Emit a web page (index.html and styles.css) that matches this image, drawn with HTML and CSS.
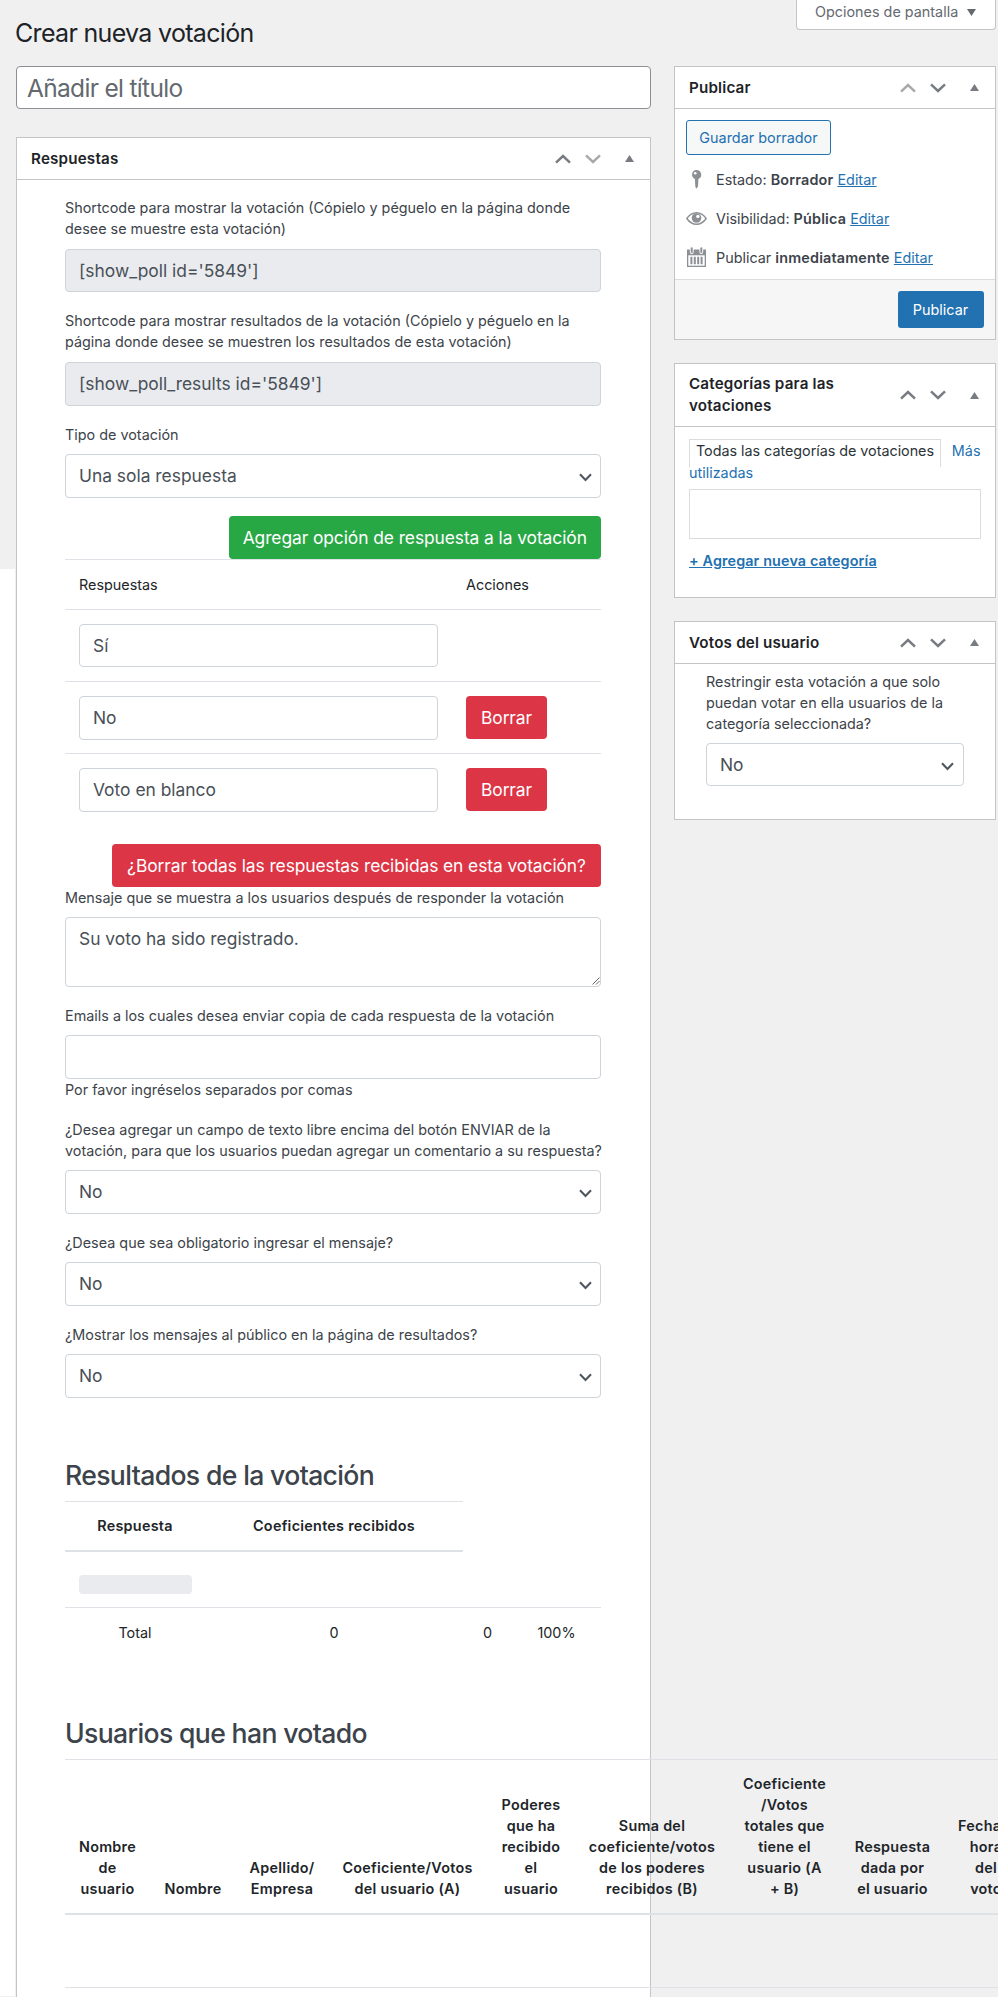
FILE: index.html
```html
<!DOCTYPE html>
<html lang="es">
<head>
<meta charset="utf-8">
<title>Crear nueva votación</title>
<link rel="stylesheet" href="styles.css">
</head>
<body>
<svg class="defs" width="0" height="0" aria-hidden="true">
  <symbol id="up" viewBox="0 0 16 10"><path d="M1 8.6 8 2l7 6.6" fill="none" stroke="currentColor" stroke-width="2.5"/></symbol>
  <symbol id="down" viewBox="0 0 16 10"><path d="M1 1.4 8 8l7-6.6" fill="none" stroke="currentColor" stroke-width="2.5"/></symbol>
  <symbol id="tri" viewBox="0 0 9 7"><path d="M4.5 0 9 7H0z" fill="currentColor"/></symbol>
  <symbol id="caret" viewBox="0 0 13 9"><path d="M1 1.3 6.5 7 12 1.3" fill="none" stroke="#50575e" stroke-width="2.1"/></symbol>
</svg>
<div class="page">
  <header class="top">
    <h1 class="page-title">Crear nueva votación</h1>
    <div class="screen-options"><span>Opciones de pantalla</span><svg class="so-tri" viewBox="0 0 9 7"><path d="M0 0h9L4.5 7z" fill="currentColor"/></svg></div>
  </header>
  <div class="columns">
    <main class="main">
      <div class="title-input">Añadir el título</div>
      <section class="box box-main">
        <div class="box-head"><h2>Respuestas</h2><div class="handles"><svg class="chev"><use href="#up"/></svg><svg class="chev dim"><use href="#down"/></svg><svg class="tri"><use href="#tri"/></svg></div></div>
        <div class="content">
          <div class="group"><div class="label">Shortcode para mostrar la votación (Cópielo y péguelo en la página donde<br>desee se muestre esta votación)</div><div class="field readonly">[show_poll id='5849']</div></div>
          <div class="group"><div class="label">Shortcode para mostrar resultados de la votación (Cópielo y péguelo en la<br>página donde desee se muestren los resultados de esta votación)</div><div class="field readonly">[show_poll_results id='5849']</div></div>
          <div class="group"><div class="label">Tipo de votación</div><div class="field select">Una sola respuesta<svg class="caret"><use href="#caret"/></svg></div></div>
          <div class="right"><button class="btn green">Agregar opción de respuesta a la votación</button></div>
          <div class="answers">
            <div class="arow ahead"><span>Respuestas</span><span>Acciones</span></div>
            <div class="arow"><div class="field">Sí</div></div>
            <div class="arow"><div class="field">No</div><button class="btn red">Borrar</button></div>
            <div class="arow"><div class="field">Voto en blanco</div><button class="btn red">Borrar</button></div>
          </div>
          <div class="right wipe"><button class="btn red wide">¿Borrar todas las respuestas recibidas en esta votación?</button></div>
          <div class="group"><div class="label tight">Mensaje que se muestra a los usuarios después de responder la votación</div><div class="field area">Su voto ha sido registrado.<svg class="grip" viewBox="0 0 8 8"><path d="M.5 7.5l7-7M4 7.5L7.5 4" stroke="#666" fill="none"/></svg></div></div>
          <div class="group mail"><div class="label">Emails a los cuales desea enviar copia de cada respuesta de la votación</div><div class="field"></div><div class="help">Por favor ingréselos separados por comas</div></div>
          <div class="group"><div class="label">¿Desea agregar un campo de texto libre encima del botón ENVIAR de la<br>votación, para que los usuarios puedan agregar un comentario a su respuesta?</div><div class="field select">No<svg class="caret"><use href="#caret"/></svg></div></div>
          <div class="group"><div class="label">¿Desea que sea obligatorio ingresar el mensaje?</div><div class="field select">No<svg class="caret"><use href="#caret"/></svg></div></div>
          <div class="group"><div class="label">¿Mostrar los mensajes al público en la página de resultados?</div><div class="field select">No<svg class="caret"><use href="#caret"/></svg></div></div>

          <h3 class="section-title">Resultados de la votación</h3>
          <table class="results">
            <colgroup><col class="r1"><col class="r2"><col class="r3"><col class="r4"></colgroup>
            <thead><tr><th>Respuesta</th><th>Coeficientes recibidos</th></tr></thead>
            <tbody>
              <tr class="progress-row"><td><div class="progress"></div></td><td></td><td></td><td></td></tr>
              <tr class="total"><td>Total</td><td>0</td><td>0</td><td>100%</td></tr>
            </tbody>
          </table>

          <h3 class="section-title second">Usuarios que han votado</h3>
          <table class="voters">
            <colgroup><col class="v1"><col class="v2"><col class="v3"><col class="v4"><col class="v5"><col class="v6"><col class="v7"><col class="v8"><col class="v9"></colgroup>
            <thead><tr>
              <th>Nombre<br>de<br>usuario</th><th>Nombre</th><th>Apellido/<br>Empresa</th><th>Coeficiente/Votos<br>del usuario (A)</th><th>Poderes<br>que ha<br>recibido<br>el<br>usuario</th><th>Suma del<br>coeficiente/votos<br>de los poderes<br>recibidos (B)</th><th>Coeficiente<br>/Votos<br>totales que<br>tiene el<br>usuario (A<br>+ B)</th><th>Respuesta<br>dada por<br>el usuario</th><th>Fecha y<br>hora<br>del<br>voto</th>
            </tr></thead>
            <tbody><tr class="blank"><td colspan="9"></td></tr><tr class="blank"><td colspan="9"></td></tr></tbody>
          </table>
        </div>
      </section>
    </main>

    <aside class="side">
      <section class="box">
        <div class="box-head"><h2>Publicar</h2><div class="handles"><svg class="chev dim"><use href="#up"/></svg><svg class="chev"><use href="#down"/></svg><svg class="tri"><use href="#tri"/></svg></div></div>
        <div class="publish">
          <button class="draft">Guardar borrador</button>
          <div class="misc"><svg class="ico" viewBox="0 0 21 21"><path d="M10.500 1a4.700 4.700 0 0 1 1.900 9l-.4 7.500-1.700 2.300-1-2.300-.4-7.500A4.700 4.700 0 0 1 10.500 1z" fill="#8c8f94"/><circle cx="9.200" cy="4.300" r="1.300" fill="#fff"/></svg><span>Estado: <b>Borrador</b> <a>Editar</a></span></div>
          <div class="misc"><svg class="ico" viewBox="0 0 21 21"><path d="M.8 10.5Q4.800 4.700 10.500 4.700T20.200 10.500Q16.200 16.300 10.500 16.300T.8 10.500z" fill="#fff" stroke="#8c8f94" stroke-width="1.4"/><circle cx="10.500" cy="10" r="4.800" fill="#8c8f94"/><circle cx="11.900" cy="8.400" r="1.700" fill="#fff"/></svg><span>Visibilidad: <b>Pública</b> <a>Editar</a></span></div>
          <div class="misc"><svg class="ico" viewBox="0 0 21 21"><path d="M1 2.500h19V20H1z" fill="#8c8f94"/><path d="M2.300 8.300h16.400v10.400H2.300z" fill="#fff"/><path d="M5.400 9.800v7.500M8.800 9.800v7.500M12.200 9.800v7.500M15.600 9.800v7.500" stroke="#8c8f94" stroke-width="2"/><path d="M5.700 1.500v3.600M15.300 1.500v3.600" stroke="#fff" stroke-width="3.800" stroke-linecap="round"/><path d="M5.700 1.300v3.600M15.300 1.300v3.600" stroke="#8c8f94" stroke-width="2" stroke-linecap="round"/></svg><span>Publicar <b>inmediatamente</b> <a>Editar</a></span></div>
        </div>
        <div class="publish-foot"><button class="primary">Publicar</button></div>
      </section>

      <section class="box">
        <div class="box-head tall"><h2>Categorías para las<br>votaciones</h2><div class="handles"><svg class="chev"><use href="#up"/></svg><svg class="chev"><use href="#down"/></svg><svg class="tri"><use href="#tri"/></svg></div></div>
        <div class="cats">
          <div class="tabs"><span class="tab">Todas las categorías de votaciones</span><a class="more">Más</a></div>
          <a class="used">utilizadas</a>
          <div class="cat-list"></div>
          <a class="add">+ Agregar nueva categoría</a>
        </div>
      </section>

      <section class="box">
        <div class="box-head"><h2>Votos del usuario</h2><div class="handles"><svg class="chev"><use href="#up"/></svg><svg class="chev"><use href="#down"/></svg><svg class="tri"><use href="#tri"/></svg></div></div>
        <div class="votes">
          <div class="label">Restringir esta votación a que solo<br>puedan votar en ella usuarios de la<br>categoría seleccionada?</div>
          <div class="field select">No<svg class="caret"><use href="#caret"/></svg></div>
        </div>
      </section>
    </aside>
  </div>
</div>
</body>
</html>
```
FILE: styles.css
```css
* { box-sizing: border-box; }
html, body { margin: 0; height: 1997px; overflow: hidden; }
body {
  font-family: Inter, "Liberation Sans", sans-serif;
  font-size: 14.380px; line-height: 21px; color: #3c434a;
  background: #f0f0f1;
}
h1, h2, h3 { margin: 0; }
button { font-family: inherit; border: 0; padding: 0; white-space: nowrap; }
.defs { position: absolute; }
.page {
  width: 998px; height: 1997px; overflow: hidden; padding: 0 2.500px 0 16px;
  background: linear-gradient(#fff, #fff) 0 569px / 15px 1427px no-repeat;
}
.top { display: flex; justify-content: space-between; height: 66px; }
.page-title { font-size: 25px; font-weight: 400; line-height: 30px; margin: 18px 0 0 -1px; color: #1d2327; letter-spacing: -0.680px; white-space: nowrap; }
.screen-options {
  display: flex; width: 199.500px; height: 29.500px; padding: 0 0 0 18px;
  background: #fff; border: 1px solid #c3c4c7; border-top: 0; border-radius: 0 0 4px 4px;
  color: #646970; white-space: nowrap;
}
.screen-options span { width: 152px; line-height: 23px; }
.so-tri { width: 9px; height: 7px; margin-top: 8.500px; }
.columns { display: flex; align-items: flex-start; }
.main { width: 635px; margin-right: 23px; flex: none; }
.side { flex: 1; min-width: 0; }

.title-input {
  height: 43px; padding: 0 10px; border: 1px solid #8c8f94; border-radius: 4px; background: #fff;
  font-size: 24.500px; line-height: 43px; letter-spacing: -0.680px; color: #646970;
}
.box { background: #fff; border: 1px solid #c3c4c7; margin-bottom: 23px; }
.box-main { margin-top: 28px; height: 1900px; }
.box-head { display: flex; justify-content: space-between; align-items: center; height: 42px; padding: 0 16px 0 14px; border-bottom: 1px solid #c3c4c7; }
.box-head.tall { height: 63px; }
.box-head h2 { font-size: 15.200px; font-weight: 600; line-height: 22px; color: #1d2327; letter-spacing: 0.180px; }
.handles { display: flex; align-items: center; color: #787c82; }
.chev { width: 16px; height: 10px; margin-right: 14px; }
.chev + .tri { width: 9px; height: 7px; margin-left: 10px; }
.chev.dim { color: #a7aaad; }

.content { width: 536px; margin: 17px 0 0 48px; }
.group { margin-bottom: 18px; }
.label { margin-bottom: 9.500px; white-space: nowrap; }
.field {
  position: relative; height: 43.500px; padding: 0 13px; border: 1px solid #ced4da; border-radius: 4px;
  background: #fff; color: #495057; font-size: 17.400px; line-height: 42px; letter-spacing: 0; white-space: nowrap;
}
.readonly { height: 43.900px; background: #eaebef; }
.caret { position: absolute; right: 8.500px; top: 18px; width: 13px; height: 9px; }
.area { height: 70px; line-height: 26px; padding-top: 8px; }
.grip { position: absolute; right: 0; bottom: 1px; width: 8px; height: 8px; }
.right { display: flex; justify-content: flex-end; }
.btn { height: 43px; border-radius: 4px; color: #fff; font-size: 17.400px; line-height: 43px; letter-spacing: -0.080px; text-align: center; }
.green { background: #28a745; width: 372.500px; }
.red { background: #dc3545; width: 81px; }
.wide { width: 489px; }

.answers { color: #212529; }
.arow { display: grid; grid-template-columns: 359px auto; column-gap: 28px; justify-content: start; align-items: start; height: 72.300px; padding: 14px 14px 0; border-top: 1px solid #dee2e6; }
.ahead { height: 50px; }
.wipe { margin-top: 18px; }
.tight { margin: 0 0 8.900px; }
.mail .help { margin-bottom: 19px; }

.section-title { font-size: 26.600px; line-height: 32px; font-weight: 500; letter-spacing: -0.650px; margin-top: 61px; white-space: nowrap; }
.second { margin-top: 61px; }
table { table-layout: fixed; border-collapse: separate; border-spacing: 0; color: #212529; text-align: center; }
th { font-weight: 600; letter-spacing: 0.270px; vertical-align: bottom; white-space: nowrap; padding: 13px 0 14.500px; border-top: 1px solid #dee2e6; border-bottom: 2px solid #dee2e6; }
td { padding: 0; }
.results { width: 536px; margin-top: 10px; }
.r1 { width: 140px; } .r2 { width: 258px; } .r3 { width: 49px; } .r4 { width: 89px; }
.progress-row td { height: 55px; }
.progress { width: 113px; height: 18.500px; margin: 10px 0 0 14px; border-radius: 4px; background: #eaebef; }
.total td { height: 49px; border-top: 1px solid #dee2e6; }
.voters { width: 962px; margin-top: 9.500px; }
.v1 { width: 85px; } .v2 { width: 86px; } .v3 { width: 92px; } .v4 { width: 159px; } .v5 { width: 88px; }
.v6 { width: 154px; } .v7 { width: 111px; } .v8 { width: 105px; } .v9 { width: 82px; }
.blank td { height: 71.500px; }
.blank + .blank td { border-top: 1px solid #dee2e6; }

a { color: #2271b1; }
b { font-weight: 600; letter-spacing: 0.170px; }
.publish { height: 170px; padding: 11px 11px 0; }
.draft { display: block; width: 145px; height: 35px; border: 1px solid #2271b1; border-radius: 3px; background: #f6f7f7; color: #2271b1; font-size: 14.400px; }
.misc { display: flex; align-items: center; height: 39px; white-space: nowrap; }
.draft + .misc { margin-top: 5px; }
.ico { width: 21px; height: 21px; margin-right: 9px; }
.misc a, .add { text-decoration: underline; }
.publish-foot { display: flex; justify-content: flex-end; height: 60px; padding: 11px 11px 0; border-top: 1px solid #dcdcde; background: #f6f6f6; }
.primary { width: 86px; height: 37px; border-radius: 3px; background: #2271b1; color: #fff; font-size: 14.400px; }
.cats { height: 170px; padding: 12px 14px 0; }
.tabs { display: flex; height: 28px; white-space: nowrap; }
.tab { width: 252px; padding-left: 6px; border: 1px solid #dcdcde; border-bottom: 0; color: #2c3338; letter-spacing: -0.040px; }
.more { margin-left: 11px; padding-top: 1px; }
.used { display: block; margin-top: -5px; line-height: 21px; }
.cat-list { height: 50px; margin-top: 6px; border: 1px solid #dcdcde; }
.add { display: block; margin-top: 11px; font-weight: 600; letter-spacing: 0.120px; }
.votes { height: 154.500px; padding: 7px 31px 0; }
.votes .label { margin-bottom: 8.500px; }
```
